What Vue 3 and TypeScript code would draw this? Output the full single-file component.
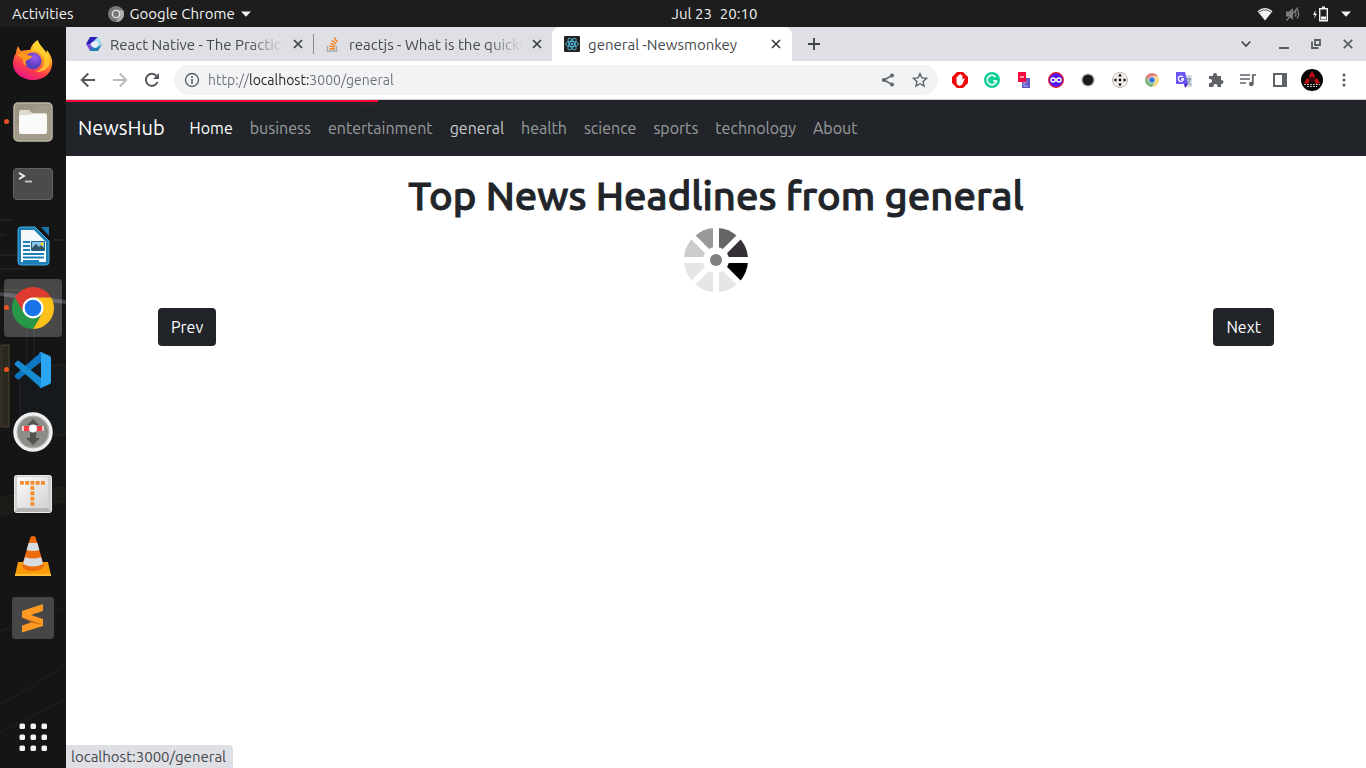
<script setup lang="ts">
import { ref } from 'vue'

interface NavLink {
  label: string
  href: string
  state?: 'active' | 'hover'
}

const links: NavLink[] = [
  { label: 'Home', href: '#home', state: 'active' },
  { label: 'business', href: '#business' },
  { label: 'entertainment', href: '#entertainment' },
  { label: 'general', href: '#general', state: 'hover' },
  { label: 'health', href: '#health' },
  { label: 'science', href: '#science' },
  { label: 'sports', href: '#sports' },
  { label: 'technology', href: '#technology' },
  { label: 'About', href: '#about' },
]

const address = ref('http://localhost:3000/general')
const progress = ref(24)

const shades = ['#666466', '#353035', '#000000', '#e5e5e5', '#e6e6e6', '#e6e6e6', '#cccccc', '#999999']
const point = (deg: number): string => {
  const a = ((deg - 90) * Math.PI) / 180
  return `${(32 + 32 * Math.cos(a)).toFixed(2)} ${(32 + 32 * Math.sin(a)).toFixed(2)}`
}
const wedges = shades.map((fill, i) => ({
  fill,
  d: `M32 32L${point(i * 45)}A32 32 0 0 1 ${point(i * 45 + 45)}Z`,
}))
const dots = [0, 1, 2, 3, 4, 5, 6, 7, 8].map((i) => ({ x: 1 + (i % 3) * 11, y: 1 + Math.floor(i / 3) * 11 }))
</script>

<template>
  <div class="desktop">
    <header class="topbar">
      <div class="topbar-left">
        <button class="plain">Activities</button>
        <button class="plain app-menu">
          <svg width="16" height="16" viewBox="0 0 16 16"><circle cx="8" cy="8" r="8" fill="#777" /><path d="M8 4h7A8 8 0 0 1 8 16l3.500-6z" fill="#aaa" /><circle cx="8" cy="8" r="4.300" fill="#e4e4e4" /><circle cx="8" cy="8" r="2.900" fill="#747474" /></svg>
          <span>Google Chrome</span>
          <svg width="10" height="6" viewBox="0 0 10 6"><path d="M0 0.500h10L5 5.700z" fill="#f2f2f2" /></svg>
        </button>
      </div>
      <button class="plain clock"><span>Jul 23</span><span>20:10</span></button>
      <div class="topbar-right">
        <svg width="16" height="14" viewBox="0 0 16 14"><path d="M0.500 4.300Q8-2.500 15.500 4.300L8 13.500z" fill="#f2f2f2" /><path d="M1.800 5.100Q8 .7 14.200 5.100" fill="none" stroke="#555" stroke-width="1" /></svg>
        <svg width="16" height="16" viewBox="0 0 16 16"><path d="M1 5.500h3l4-3.500v12l-4-3.500H1z" fill="#7c7c7c" /><path d="M10 5.500q2 2.500 0 5M12 3.500q3.500 4.500 0 9M1.500 14.500L13 1.500" fill="none" stroke="#7c7c7c" stroke-width="1.300" /></svg>
        <svg width="16" height="16" viewBox="0 0 16 16"><path d="M2.500 4L0 9h2L1 13l3-5.300H2.300z" fill="#f2f2f2" /><path d="M6.700 2.700h7.600v12H6.700z" fill="none" stroke="#f2f2f2" stroke-width="1.400" /><path d="M9 .5h3v2H9zM8 10.500h5v3H8z" fill="#f2f2f2" /></svg>
        <svg width="10" height="6" viewBox="0 0 10 6"><path d="M0 0.500h10L5 5.700z" fill="#f2f2f2" /></svg>
      </div>
    </header>

    <div class="workspace">
      <nav class="dock" aria-label="Applications">
        <svg class="dock-texture" viewBox="0 0 66 741" preserveAspectRatio="none" aria-hidden="true">
          <g fill="none" stroke-width="1">
            <path d="M0 220h14M0 235h6M54 240h12M0 255h22M0 269h26M0 290h30" stroke="#302d24" transform="translate(0 -27)" />
            <path d="M0 267l66 8" stroke="#46414a" stroke-width="4" />
            <path d="M1 318h8v82H1z" fill="#2b2820" stroke="#4a4231" />
            <path d="M20 338h46v70H20zM27 290v48M34 290v48" fill="#16191c" stroke="#22262a" />
            <path d="M0 488l66-14v-14L0 470zM0 604l66-24M0 678l66-40M0 706l66-34" fill="#1a1a17" stroke="#24231d" />
          </g>
        </svg>
        <ul class="dock-list">
          <li>
            <button class="dock-item" aria-label="Firefox">
              <svg width="42" height="42" viewBox="0 0 42 42">
                <defs>
                  <linearGradient id="ff-a" x1=".8" y1="0" x2=".3" y2="1"><stop offset="0" stop-color="#fff44f" /><stop offset=".4" stop-color="#ff9a1f" /><stop offset=".72" stop-color="#ff3a4e" /><stop offset="1" stop-color="#e31587" /></linearGradient>
                  <radialGradient id="ff-b" cx=".6" cy=".3"><stop offset="0" stop-color="#a05af0" /><stop offset="1" stop-color="#5a3fc0" /></radialGradient>
                </defs>
                <path d="M6 7c1 2 2 4 3 5 3-1 6-1 9-1 1-4 4-8 8-10 0 4 4 6 6 10 1 1 2 3 2 4l1-4c4 5 6 10 5 15-1 9-9 15-19 15S1 34 1 25c0-4 1-8 3-11 0-2 1-5 2-7z" fill="url(#ff-a)" />
                <path d="M20 12c6-1 11 3 12 8 1 6-2 11-9 13 11 1 17-7 14-15-2-6-7-8-11-16-4 2-6 6-6 10z" fill="#ffd52e" opacity=".75" />
                <circle cx="21" cy="22" r="8.500" fill="url(#ff-b)" />
                <path d="M5 16c4-3 7-2 9 0l6 1c0 3-4 3-6 5-1 2 0 4 1 5-3-1-5-4-4-7z" fill="#ff9b20" />
              </svg>
            </button>
          </li>
          <li class="running">
            <button class="dock-item" aria-label="Files">
              <svg width="40" height="40" viewBox="0 0 40 40"><rect x="1" y="1" width="38" height="38" rx="4" fill="#9b9482" stroke="#bdb7a5" stroke-width="1.500" /><path d="M3 24L24 3h13v34H3z" fill="#a8a18f" opacity=".6" /><path d="M6 10q0-2 2-2h8l3 3h13q2 0 2 2v17H6z" fill="#dfdbd1" /><rect x="6" y="13" width="28" height="19" rx="2" fill="#fafaf8" /><path d="M6 13q0 2 2 2h8l3-3h13q2 0 2 2v2H6z" fill="#fafaf8" /></svg>
            </button>
          </li>
          <li>
            <button class="dock-item" aria-label="Terminal">
              <svg width="40" height="32" viewBox="0 0 40 32"><rect x=".5" y=".5" width="39" height="31" rx="3" fill="#4b4b4b" stroke="#626262" /><path d="M6 5l5 3-5 3" fill="none" stroke="#f4f4f4" stroke-width="1.800" /><path d="M12 13.500h7" stroke="#c8c8c8" stroke-width="1.800" /></svg>
            </button>
          </li>
          <li>
            <button class="dock-item" aria-label="LibreOffice Writer">
              <svg width="34" height="40" viewBox="0 0 34 40"><path d="M5 1h14l14 14v21q0 3-3 3H5q-3 0-3-3V4q0-3 3-3z" fill="#1c80b8" stroke="#43a5d8" /><path d="M5 4h13l12 12v20H5z" fill="#f5f8fa" /><path d="M5 22h25v14H5z" fill="#fff" /><path d="M25 1h8v9z" fill="#1b75aa" /><path d="M7 16h7M7 20h7M7 24h7M7 28h21M7 31.500h21M7 35h16" stroke="#1c80b8" stroke-width="2" /><path d="M15.500 15.500h13v9h-13z" fill="#86c5e6" stroke="#19658f" /><path d="M16 24v-2l4-4 3 3 2-2 3 3v2z" fill="#315466" /><circle cx="26" cy="18" r="1.500" fill="#ffd21c" /></svg>
            </button>
          </li>
          <li class="running">
            <button class="dock-item current" aria-label="Google Chrome">
              <svg width="42" height="42" viewBox="0 0 48 48"><circle cx="24" cy="24" r="13" fill="#fff" /><path d="M24 12h20.780a24 24 0 0 0-41.560 0L13.610 30A12 12 0 0 1 24 12z" fill="#dd3b30" /><path d="M34.390 30L24 48A24 24 0 0 0 44.780 12H24A12 12 0 0 1 34.390 30z" fill="#fcc21b" /><path d="M13.610 30L3.220 12A24 24 0 0 0 24 48l10.390-18a12 12 0 0 1-20.780 0z" fill="#279847" /><circle cx="24" cy="24" r="9.500" fill="#1a73e8" /></svg>
            </button>
          </li>
          <li class="running">
            <button class="dock-item" aria-label="Visual Studio Code">
              <svg width="38" height="38" viewBox="0 0 38 38"><path d="M27 1v10L5 28q-1 1-2 0l-2-2q-1-1 0-2z" fill="#0d78c1" /><path d="M27 37V27L5 10q-1-1-2 0l-2 2q-1 1 0 2z" fill="#168bd2" /><path d="M27 1l9 4q1 .5 1 2v24q0 1.500-1 2l-9 4q-1 .5-2-1 2 1 2-1V3q0-2-2-1 1-1.500 2-1z" fill="#2aa5f2" /></svg>
            </button>
          </li>
          <li>
            <button class="dock-item" aria-label="Image Flasher">
              <svg width="40" height="40" viewBox="0 0 40 40"><circle cx="20" cy="20" r="18" fill="#8b8e88" stroke="#efefef" stroke-width="3.500" /><circle cx="20" cy="20" r="15.800" fill="none" stroke="#b4b7b0" /><path d="M20 7l6 6h-3v13h4l-7 7-7-7h4V13h-3z" fill="#50534f" /><rect x="9" y="14" width="22" height="5" rx="1" fill="#f63e4b" /><rect x="9" y="14" width="2" height="5" fill="#fac8ca" /><rect x="29" y="14" width="2" height="5" fill="#fac8ca" /><circle cx="20" cy="16.500" r="4" fill="#fff" /></svg>
            </button>
          </li>
          <li>
            <button class="dock-item" aria-label="Typing">
              <svg width="38" height="38" viewBox="0 0 38 38"><defs><linearGradient id="key" x1="0" y1="0" x2="1" y2="1"><stop offset="0" stop-color="#fcfcfc" /><stop offset="1" stop-color="#d2d2d2" /></linearGradient></defs><rect x=".5" y=".5" width="37" height="37" rx="2" fill="#d0d0d0" stroke="#ececec" /><path d="M1 37l3-4h30l3 4z" fill="#b4b4b4" /><rect x="3" y="2" width="31" height="31" rx="2" fill="url(#key)" /><path d="M6 6h3.800v3.800H6zM11.250 6h3.800v3.800h-3.800zM16.500 6h3.800v3.800h-3.800zM21.750 6h3.800v3.800h-3.800zM27 6h3.800v3.800H27zM16.500 11.250h3.800v3.800h-3.800zM16.500 16.500h3.800v3.800h-3.800zM16.500 21.750h3.800v3.800h-3.800zM16.500 27h3.800v3.800h-3.800z" fill="#f58c28" /></svg>
            </button>
          </li>
          <li>
            <button class="dock-item" aria-label="VLC media player">
              <svg width="36" height="42" viewBox="0 0 36 42"><path d="M3 27h30l3 13.500H0z" fill="#fb9b0c" /><path d="M0 39h36v2H0z" fill="#ffbe35" /><path d="M15.500 2q2.500-2 5 0L29 31q-2 5-11 5T7 31z" fill="#ed6c0c" /><path d="M13.600 8h8.800l2 7q-6.500 2-12.800 0zM10 22q8 3 16 0l2 7q-10 5-20 0z" fill="#d5dde2" /></svg>
            </button>
          </li>
          <li>
            <button class="dock-item" aria-label="Sublime Text">
              <svg width="42" height="42" viewBox="0 0 42 42"><rect width="42" height="42" rx="3" fill="#464646" /><path d="M10 14l21-7v7l-12 4 12 4v7l-21 6.500v-7l12-4-12-4z" fill="#ff9921" /><path d="M10 20.500l21 7-9-1z" fill="#d27418" /></svg>
            </button>
          </li>
        </ul>
        <button class="dock-item" aria-label="Show applications">
          <svg width="28" height="28" viewBox="0 0 28 28"><rect v-for="(d, i) in dots" :key="i" :x="d.x - 0.5" :y="d.y - 0.5" width="5.500" height="5.500" rx="1.500" fill="#f4f4f2" /></svg>
        </button>
      </nav>

      <section class="browser">
        <div class="tabstrip">
          <div class="tab">
            <svg width="16" height="16" viewBox="0 0 16 16"><path d="M4 1h8L7 6 4 8H0z" fill="#2a1fb8" /><path d="M0 8h4l3 4-3 3z" fill="#7a50da" /><path d="M4 15l2-4 4 1 6-4-4 7z" fill="#1b7fb4" /><path d="M12 1l4 7-6 4-3-2V6z" fill="#9fdcec" /><path d="M6 6l5-1 2 3-4 4-4-3z" fill="#e5f1f8" /></svg>
            <span class="title">React Native - The Practica</span>
            <button class="close" aria-label="Close tab"><svg width="10" height="10" viewBox="0 0 10 10"><path d="M1 1l8 8M9 1L1 9" stroke="#3c4043" stroke-width="1.700" /></svg></button>
          </div>
          <div class="tab second">
            <svg width="16" height="16" viewBox="0 0 16 16"><path d="M2.500 10v5h9v-5" fill="none" stroke="#a5a9ad" stroke-width="1.400" /><path d="M4.500 12.700h5.500M4.600 10.200l5.500.6M5.200 7.400l5.200 1.700M6.600 4.200l4.400 3.200M9.200 1.500l3.100 4.600" stroke="#f48024" stroke-width="1.400" /></svg>
            <span class="title">reactjs - What is the quicke</span>
            <button class="close" aria-label="Close tab"><svg width="10" height="10" viewBox="0 0 10 10"><path d="M1 1l8 8M9 1L1 9" stroke="#3c4043" stroke-width="1.700" /></svg></button>
          </div>
          <div class="tab selected">
            <svg width="16" height="16" viewBox="0 0 16 16"><rect width="16" height="16" rx="1" fill="#222" /><g fill="none" stroke="#53b9d9" stroke-width=".9"><ellipse cx="8" cy="8" rx="6.500" ry="2.600" /><ellipse cx="8" cy="8" rx="6.500" ry="2.600" transform="rotate(60 8 8)" /><ellipse cx="8" cy="8" rx="6.500" ry="2.600" transform="rotate(120 8 8)" /></g><circle cx="8" cy="8" r="1.300" fill="#53b9d9" /></svg>
            <span class="title">general -Newsmonkey</span>
            <button class="close" aria-label="Close tab"><svg width="10" height="10" viewBox="0 0 10 10"><path d="M1 1l8 8M9 1L1 9" stroke="#3c4043" stroke-width="1.700" /></svg></button>
          </div>
          <button class="new-tab" aria-label="New tab"><svg width="12" height="12" viewBox="0 0 12 12"><path d="M6 0v12M0 6h12" stroke="#3c4043" stroke-width="1.800" /></svg></button>
          <div class="window-controls">
            <button class="icon search-tabs" aria-label="Search tabs"><svg width="10" height="8" viewBox="0 0 10 8"><path d="M.7 1.500L5 6l4.300-4.500" fill="none" stroke="#44474b" stroke-width="1.700" /></svg></button>
            <button class="icon" aria-label="Minimize"><svg width="10" height="10" viewBox="0 0 10 10"><path d="M0 9h10" stroke="#5a5d62" stroke-width="2" /></svg></button>
            <button class="icon" aria-label="Restore"><svg width="10" height="10" viewBox="0 0 10 10"><path d="M4 1h5v5H4zM1 2.500V9h6.500" fill="none" stroke="#5a5d62" stroke-width="1.800" /></svg></button>
            <button class="icon" aria-label="Close window"><svg width="10" height="10" viewBox="0 0 10 10"><path d="M.8.8l8.400 8.400M9.200.8L.8 9.200" stroke="#5a5d62" stroke-width="1.800" /></svg></button>
          </div>
        </div>

        <div class="toolbar">
          <button class="icon" aria-label="Back"><svg width="16" height="16" viewBox="0 0 16 16"><path d="M15 8H2M8.200 1.500L1.800 8l6.400 6.500" fill="none" stroke="#55585d" stroke-width="2" /></svg></button>
          <button class="icon" aria-label="Forward"><svg width="16" height="16" viewBox="0 0 16 16"><path d="M1 8h13M7.800 1.500L14.200 8l-6.400 6.500" fill="none" stroke="#b9bbbe" stroke-width="2" /></svg></button>
          <button class="icon" aria-label="Reload"><svg width="16" height="16" viewBox="0 0 16 16"><path d="M13.500 10A6 6 0 1 1 12.500 4" fill="none" stroke="#55585d" stroke-width="2" /><path d="M15 1v6H9z" fill="#55585d" /></svg></button>
          <div class="omnibox">
            <svg width="16" height="16" viewBox="0 0 16 16"><circle cx="8" cy="8" r="6.500" fill="none" stroke="#5f6368" stroke-width="1.400" /><path d="M8 7v5M8 4v2" stroke="#5f6368" stroke-width="1.600" /></svg>
            <input v-model="address" type="text" aria-label="Address" />
            <button class="icon" aria-label="Share"><svg width="14" height="14" viewBox="0 0 14 14"><path d="M11 2.500L3 7l8 4.500" fill="none" stroke="#5f6368" stroke-width="1.500" /><circle cx="11" cy="2.500" r="2" fill="#5f6368" /><circle cx="3" cy="7" r="2.100" fill="#5f6368" /><circle cx="11" cy="11.500" r="2" fill="#5f6368" /></svg></button>
            <button class="icon" aria-label="Bookmark"><svg width="16" height="16" viewBox="0 0 16 16"><path d="M8 1.700l1.900 4.200 4.600.5-3.400 3.100.9 4.500L8 11.700 4 14l.9-4.500-3.400-3.100 4.600-.5z" fill="none" stroke="#5f6368" stroke-width="1.400" /></svg></button>
          </div>
          <button class="icon" aria-label="Ad blocker"><svg width="16" height="16" viewBox="0 0 16 16"><path d="M5 0h6l5 5v6l-5 5H5l-5-5V5z" fill="#ec0808" /><path d="M4.500 8V5q.8-1 1.500 0V3.500q.8-1 1.500 0v-1q.8-1 1.500 0v1q.8-1 1.500 0V8l1-1.500q1-.5 1.200.3L10.500 12q-1 1.800-3 1.800T4.800 12z" fill="#fff" /></svg></button>
          <button class="icon" aria-label="Writing assistant"><svg width="16" height="16" viewBox="0 0 16 16"><circle cx="8" cy="8" r="8" fill="#11cf98" /><path d="M11.500 5A4.700 4.700 0 1 0 12.500 9H9" fill="none" stroke="#fff" stroke-width="1.500" /></svg></button>
          <button class="icon" aria-label="Copy helper"><svg width="14" height="16" viewBox="0 0 14 16"><path d="M5 6h8v10H5z" fill="#6259c7" /><path d="M10 10H7v4h4" fill="none" stroke="#b5b3ee" /><path d="M1 0h8v10H1z" fill="#f5093e" /><path d="M3 5h4" stroke="#fff" stroke-width="1.200" /></svg></button>
          <button class="icon" aria-label="Infinity"><svg width="16" height="16" viewBox="0 0 16 16"><circle cx="8" cy="8" r="7.300" fill="#5316f4" stroke="#e9142d" stroke-width="1.300" /><path d="M8 8C6 5 3 5.500 3 8s3 3 5 0 5-2.500 5 0-3 3-5 0z" fill="none" stroke="#fff" stroke-width="1.500" /></svg></button>
          <button class="icon" aria-label="Dark mode"><svg width="14" height="14" viewBox="0 0 14 14"><circle cx="7" cy="7" r="6.200" fill="#1b1b1b" stroke="#d0d0d0" stroke-width="1.300" /></svg></button>
          <button class="icon" aria-label="Scroll"><svg width="16" height="16" viewBox="0 0 16 16"><circle cx="8" cy="8" r="7.500" fill="#f7f1f0" stroke="#bcb4b3" /><path d="M8 1.500L10 4.500H6zM8 14.500L6 11.500h4zM1.500 8l3-2v4zM14.500 8l-3 2V6z" fill="#111" /><circle cx="8" cy="8" r="1.400" fill="#111" /></svg></button>
          <button class="icon" aria-label="Chrome extension"><svg width="14" height="14" viewBox="0 0 48 48"><circle cx="24" cy="24" r="13" fill="#fff" /><path d="M24 12h20.780a24 24 0 0 0-41.560 0L13.610 30A12 12 0 0 1 24 12z" fill="#e2827a" /><path d="M34.390 30L24 48A24 24 0 0 0 44.780 12H24A12 12 0 0 1 34.390 30z" fill="#f5dc80" /><path d="M13.610 30L3.220 12A24 24 0 0 0 24 48l10.390-18a12 12 0 0 1-20.780 0z" fill="#7fb780" /><circle cx="24" cy="24" r="9.500" fill="#3475d8" /></svg></button>
          <button class="icon" aria-label="Translate"><svg width="16" height="16" viewBox="0 0 16 16"><path d="M7 3h9v12H9z" fill="#d6dade" /><path d="M10 7h5M12.500 6v1M14 7q-.5 4-4 5M11 9l4 4" fill="none" stroke="#68898f" stroke-width="1" /><path d="M0 0h9l3 12H0z" fill="#6b55f4" /><path d="M8 12h4l-3 4z" fill="#4922c4" /><path d="M7 5.200A2.600 2.600 0 1 0 7.500 7H5" fill="none" stroke="#fff" stroke-width="1.300" /></svg></button>
          <button class="icon" aria-label="Extensions"><svg width="16" height="16" viewBox="0 0 16 16"><path d="M1 4h4V3a2 2 0 0 1 4 0v1h4v4h.500a2 2 0 0 1 0 4H13v3H9.500v-1a2 2 0 0 0-4 0v1H1v-4h1a2 2 0 0 0 0-4H1z" fill="#5f6368" /></svg></button>
          <button class="icon" aria-label="Media controls"><svg width="16" height="14" viewBox="0 0 16 14"><path d="M0 2h10M0 6h10M0 10h6" stroke="#5f6368" stroke-width="1.700" /><path d="M12.800 11V2H16" fill="none" stroke="#5f6368" stroke-width="1.700" /><circle cx="11.300" cy="11" r="2.300" fill="#5f6368" /></svg></button>
          <button class="icon" aria-label="Side panel"><svg width="14" height="14" viewBox="0 0 14 14"><path d="M1 1h12v12H1z" fill="#fff" stroke="#5f6368" stroke-width="2" /><path d="M9 1h4v12H9z" fill="#5f6368" /></svg></button>
          <button class="icon" aria-label="Profile"><svg width="22" height="22" viewBox="0 0 22 22"><circle cx="11" cy="11" r="11" fill="#050505" /><path d="M11 2l3 5-1 3-2-3-2 3-1-3zM6 9l3 2-2 4-4-1zM16 9l-3 2 2 4 4-1z" fill="#c40d18" /><path d="M9 10l2-1 2 1-1 4h-2z" fill="#32070a" /><path d="M3 15.500h16M6 17.500h10" stroke="#bdbdbd" stroke-width="1" stroke-dasharray="2 1" /></svg></button>
          <button class="icon" aria-label="Menu"><svg width="4" height="14" viewBox="0 0 4 14"><circle cx="2" cy="2" r="1.600" fill="#5f6368" /><circle cx="2" cy="7" r="1.600" fill="#5f6368" /><circle cx="2" cy="12" r="1.600" fill="#5f6368" /></svg></button>
        </div>

        <div class="page">
          <div class="loading-bar" :style="{ width: progress + '%' }"></div>
          <nav class="navbar">
            <a class="brand" href="#home">NewsHub</a>
            <ul>
              <li v-for="link in links" :key="link.label">
                <a :href="link.href" :class="link.state">{{ link.label }}</a>
              </li>
            </ul>
          </nav>
          <main>
            <h1>Top News Headlines from general</h1>
            <svg class="spinner" width="64" height="64" viewBox="0 0 64 64" role="img" aria-label="Loading">
              <path v-for="w in wedges" :key="w.d" :d="w.d" :fill="w.fill" />
              <path d="M32 0v64M0 32h64M9 9l46 46M55 9L9 55" stroke="#fff" stroke-width="6" />
              <circle cx="32" cy="32" r="13" fill="#fff" />
              <circle cx="32" cy="32" r="6" fill="#808080" />
            </svg>
            <div class="pager">
              <button>Prev</button>
              <button>Next</button>
            </div>
          </main>
          <div class="status">localhost:3000/general</div>
        </div>
      </section>
    </div>
  </div>
</template>

<style>
body {
  margin: 0;
}
</style>

<style scoped>
* {
  box-sizing: border-box;
}
.desktop {
  display: flex;
  flex-direction: column;
  min-height: 100vh;
  background: #161616;
  font-family: Ubuntu, "Noto Sans", "Open Sans", sans-serif;
  font-size: 15px;
}
svg {
  display: block;
  flex: none;
}
button {
  margin: 0;
  border: 0;
  padding: 0;
  background: none;
  font: inherit;
  color: inherit;
}
ul {
  margin: 0;
  padding: 0;
  list-style: none;
}
.topbar {
  display: grid;
  grid-template-columns: 66px 1fr auto 1fr;
  align-items: center;
  height: 27px;
  padding: 0 15px 0 12px;
  background: #1d1d1d;
  color: #f2f2f2;
}
.topbar-left,
.topbar-right,
.app-menu,
.clock {
  display: flex;
  align-items: center;
}
.topbar-left {
  grid-column: 1 / 3;
  gap: 34px;
}
.app-menu {
  gap: 6px;
}
.clock {
  gap: 8px;
}
.topbar-right {
  justify-content: flex-end;
  gap: 12px;
}
.workspace {
  display: flex;
  flex: 1;
}
.dock {
  position: relative;
  display: flex;
  flex-direction: column;
  justify-content: space-between;
  width: 66px;
  padding: 4px 4px 2px;
  background: #151515;
}
.dock-texture {
  position: absolute;
  inset: 0;
  width: 100%;
  height: 100%;
}
.dock-list {
  position: relative;
  display: grid;
  gap: 4px;
}
.dock-list li {
  position: relative;
}
.dock-item {
  position: relative;
  display: grid;
  place-items: center;
  width: 100%;
  height: 58px;
  border-radius: 4px;
}
.dock-item.current {
  background: rgba(255, 255, 255, 0.22);
}
.running::before {
  content: "";
  position: absolute;
  z-index: 1;
  left: 0;
  top: 26px;
  width: 5px;
  height: 5px;
  border-radius: 50%;
  background: #e95420;
}
.browser {
  display: flex;
  flex: 1;
  flex-direction: column;
  min-width: 0;
  background: #fff;
}
.tabstrip {
  display: flex;
  height: 34px;
  padding: 0 2px 0 8px;
  background: #dfe0e5;
  color: #45484c;
}
.tab {
  display: flex;
  align-items: center;
  gap: 8px;
  flex: 0 1 240px;
  min-width: 0;
  padding: 0 10px 0 12px;
}
.tab + .tab {
  margin-left: -1px;
}
.tab.second {
  background: linear-gradient(#85888d, #85888d) left center / 1px 20px no-repeat;
}
.tab.selected {
  border-radius: 8px 8px 0 0;
  background: #fff;
}
.title {
  flex: 1;
  overflow: hidden;
  white-space: nowrap;
}
.tab:not(.selected) .title {
  mask-image: linear-gradient(to right, #000 calc(100% - 36px), transparent);
}
.close {
  display: grid;
  flex: none;
  place-items: center;
  width: 12px;
  height: 16px;
}
.new-tab {
  width: 28px;
  margin-left: 8px;
  display: grid;
  place-items: center;
}
.window-controls {
  display: flex;
  margin-left: auto;
}
.icon {
  display: grid;
  flex: none;
  place-items: center;
  width: 32px;
}
.search-tabs {
  margin-right: 6px;
}
.toolbar {
  display: flex;
  align-items: center;
  padding: 4px 6px;
  border-bottom: 1px solid #d3d3d5;
}
.omnibox {
  display: flex;
  flex: 1;
  align-items: center;
  min-width: 0;
  height: 30px;
  margin: 0 6px;
  padding: 0 2px 0 10px;
  border-radius: 15px;
  background: #f1f3f4;
}
.omnibox input {
  flex: 1;
  min-width: 0;
  margin-left: 8px;
  padding: 0;
  border: 0;
  outline: 0;
  background: linear-gradient(to right, #6c6f74 41px, #202124 41px, #202124 101px, #6c6f74 101px);
  background-clip: text;
  -webkit-text-fill-color: transparent;
  font: inherit;
  font-size: 14px;
}
.page {
  position: relative;
  flex: 1;
  color: #212529;
  font-size: 16px;
  line-height: 24px;
}
.loading-bar {
  position: absolute;
  top: 0;
  left: 0;
  height: 2px;
  background: #f5053c;
}
.loading-bar::after {
  content: "";
  position: absolute;
  top: 2px;
  right: 0;
  width: 80px;
  height: 5px;
  background: linear-gradient(to bottom right, transparent 40%, rgba(245, 5, 60, 0.3));
  mask-image: linear-gradient(#000, transparent);
}
.navbar {
  display: flex;
  align-items: center;
  height: 56px;
  padding: 0 12px;
  background: #212529;
}
.navbar a {
  color: rgba(255, 255, 255, 0.55);
  text-decoration: none;
}
.navbar a.brand {
  margin-right: 17px;
  color: #fff;
  font-size: 20px;
}
.navbar ul {
  display: flex;
  gap: 1px;
}
.navbar li a {
  padding: 8px;
}
.navbar a.active {
  color: #fff;
}
.navbar a.hover {
  color: rgba(255, 255, 255, 0.75);
}
main {
  max-width: 1140px;
  margin: 0 auto;
  padding: 16px 12px;
}
h1 {
  margin: 0 0 8px;
  font-size: 40px;
  font-weight: 500;
  line-height: 48px;
  text-align: center;
  -webkit-text-stroke: 1px #212529;
}
.spinner {
  margin: 0 auto 16px;
}
.pager {
  display: flex;
  justify-content: space-between;
}
.pager button {
  padding: 7px 13px;
  border-radius: 4px;
  background: #212529;
  color: #fff;
}
.status {
  position: absolute;
  left: 0;
  bottom: 0;
  padding: 0 7px 0 5px;
  border-radius: 0 4px 0 0;
  background: #dfe0e5;
  color: #45484c;
  font-size: 15px;
  line-height: 23px;
}
</style>
